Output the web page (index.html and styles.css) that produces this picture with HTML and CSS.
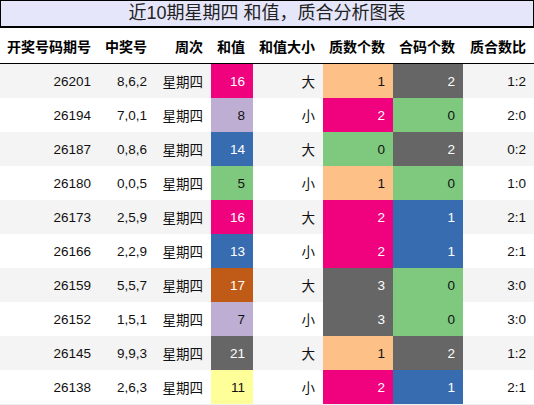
FILE: index.html
```html
<!DOCTYPE html>
<html lang="zh">
<head>
<meta charset="utf-8">
<link rel="stylesheet" href="styles.css">
</head>
<body>
<div class="title">近10期星期四 和值，质合分析图表</div>
<table class="grid">
  <colgroup>
    <col class="c1"><col class="c2"><col class="c3"><col class="c4"><col class="c5"><col class="c6"><col class="c7"><col class="c8">
  </colgroup>
  <thead>
    <tr><th>开奖号码期号</th><th>中奖号</th><th>周次</th><th>和值</th><th>和值大小</th><th>质数个数</th><th>合码个数</th><th>质合数比</th></tr>
  </thead>
  <tbody>
    <tr><td>26201</td><td>8,6,2</td><td>星期四</td><td class="pink">16</td><td>大</td><td class="peach">1</td><td class="gray">2</td><td>1:2</td></tr>
    <tr><td>26194</td><td>7,0,1</td><td>星期四</td><td class="lav">8</td><td>小</td><td class="pink">2</td><td class="green">0</td><td>2:0</td></tr>
    <tr><td>26187</td><td>0,8,6</td><td>星期四</td><td class="blue">14</td><td>大</td><td class="green">0</td><td class="gray">2</td><td>0:2</td></tr>
    <tr><td>26180</td><td>0,0,5</td><td>星期四</td><td class="green">5</td><td>小</td><td class="peach">1</td><td class="green">0</td><td>1:0</td></tr>
    <tr><td>26173</td><td>2,5,9</td><td>星期四</td><td class="pink">16</td><td>大</td><td class="pink">2</td><td class="blue">1</td><td>2:1</td></tr>
    <tr><td>26166</td><td>2,2,9</td><td>星期四</td><td class="blue">13</td><td>小</td><td class="pink">2</td><td class="blue">1</td><td>2:1</td></tr>
    <tr><td>26159</td><td>5,5,7</td><td>星期四</td><td class="brown">17</td><td>大</td><td class="gray">3</td><td class="green">0</td><td>3:0</td></tr>
    <tr><td>26152</td><td>1,5,1</td><td>星期四</td><td class="lav">7</td><td>小</td><td class="gray">3</td><td class="green">0</td><td>3:0</td></tr>
    <tr><td>26145</td><td>9,9,3</td><td>星期四</td><td class="gray">21</td><td>大</td><td class="peach">1</td><td class="gray">2</td><td>1:2</td></tr>
    <tr><td>26138</td><td>2,6,3</td><td>星期四</td><td class="yellow">11</td><td>小</td><td class="pink">2</td><td class="blue">1</td><td>2:1</td></tr>
  </tbody>
</table>
</body>
</html>
```
FILE: styles.css
```css
html, body {
  margin: 0;
  padding: 0;
  background: #fff;
}
body {
  width: 534px;
  font-family: "Liberation Sans", "Noto Sans CJK SC", sans-serif;
  color: #111;
}
.title {
  box-sizing: border-box;
  height: 28px;
  border: 1px solid #000;
  border-bottom-width: 2px;
  background: #e6e6fa;
  color: #222;
  font-size: 18px;
  line-height: 25px;
  text-align: center;
}
.grid {
  width: 534px;
  border-collapse: collapse;
  table-layout: fixed;
  font-size: 13.5px;
}
.c1 { width: 99px; }
.c2 { width: 56px; }
.c3 { width: 56px; }
.c4 { width: 42px; }
.c5 { width: 70px; }
.c6 { width: 70px; }
.c7 { width: 70px; }
.c8 { width: 71px; }
.grid th {
  height: 35px;
  padding: 0 8px 0 0;
  text-align: right;
  font-size: 14px;
  font-weight: bold;
  color: #000;
  border-bottom: 1px solid #000;
  white-space: nowrap;
}
.grid td {
  height: 34px;
  padding: 0 8px 0 0;
  text-align: right;
  white-space: nowrap;
}
.grid tbody tr:nth-child(odd) { background: #f4f4f4; }
.grid tbody tr:nth-child(even) { background: #fff; }
.grid tbody tr:last-child td { border-bottom: 1px solid #eee; }
.pink { background: #f0027f; color: #fff; }
.lav { background: #beaed4; color: #111; }
.blue { background: #386cb0; color: #fff; }
.green { background: #7fc97f; color: #111; }
.peach { background: #fdc086; color: #111; }
.gray { background: #666666; color: #fff; }
.brown { background: #bf5b17; color: #fff; }
.yellow { background: #ffff99; color: #111; }
```
